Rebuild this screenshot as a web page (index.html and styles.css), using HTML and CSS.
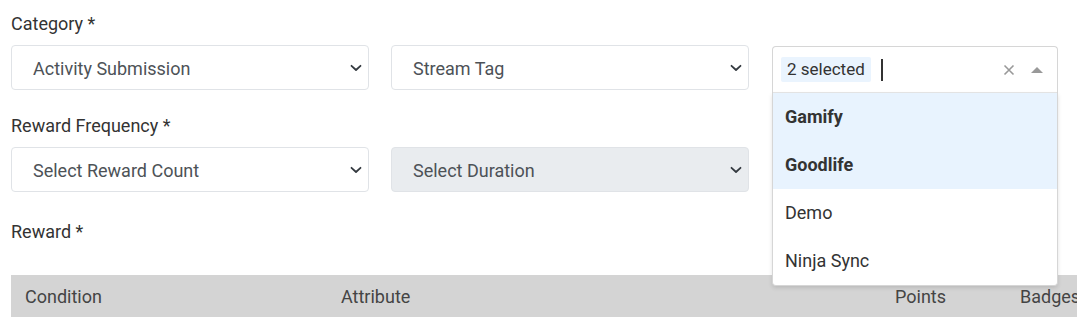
FILE: index.html
```html
<!DOCTYPE html>
<html lang="en">
<head>
    <meta charset="UTF-8">
    <title>Reward Rule</title>
    <link rel="stylesheet" href="styles.css">
</head>
<body>
    <div class="form">
        <!-- Category -->
        <label class="field-label">Category *</label>
        <div class="row">
            <div class="select">
                <span>Activity Submission</span>
                <svg class="chevron" width="12" height="8" viewBox="0 0 12 8"><path d="M1.5 1.8 6 6l4.5-4.2" fill="none" stroke="#343a40" stroke-width="1.8" stroke-linecap="round" stroke-linejoin="round"/></svg>
            </div>
            <div class="select">
                <span>Stream Tag</span>
                <svg class="chevron" width="12" height="8" viewBox="0 0 12 8"><path d="M1.5 1.8 6 6l4.5-4.2" fill="none" stroke="#343a40" stroke-width="1.8" stroke-linecap="round" stroke-linejoin="round"/></svg>
            </div>
            <div class="multi">
                <div class="multi-head">
                    <span class="chip">2 selected</span>
                    <span class="caret"></span>
                    <svg class="clear" width="12" height="12" viewBox="0 0 12 12"><path d="M1.5 1.5l9 9M10.5 1.5l-9 9" stroke="#999" stroke-width="1.6"/></svg>
                    <span class="arrow-up"></span>
                </div>
                <ul class="options">
                    <li class="selected">Gamify</li>
                    <li class="selected">Goodlife</li>
                    <li>Demo</li>
                    <li>Ninja Sync</li>
                </ul>
            </div>
        </div>

        <!-- Reward Frequency -->
        <label class="field-label">Reward Frequency *</label>
        <div class="row">
            <div class="select">
                <span>Select Reward Count</span>
                <svg class="chevron" width="12" height="8" viewBox="0 0 12 8"><path d="M1.5 1.8 6 6l4.5-4.2" fill="none" stroke="#343a40" stroke-width="1.8" stroke-linecap="round" stroke-linejoin="round"/></svg>
            </div>
            <div class="select disabled">
                <span>Select Duration</span>
                <svg class="chevron" width="12" height="8" viewBox="0 0 12 8"><path d="M1.5 1.8 6 6l4.5-4.2" fill="none" stroke="#343a40" stroke-width="1.8" stroke-linecap="round" stroke-linejoin="round"/></svg>
            </div>
        </div>

        <!-- Reward -->
        <label class="field-label reward-label">Reward *</label>
        <div class="table-head">
            <span>Condition</span>
            <span>Attribute</span>
            <span>Points</span>
            <span>Badges</span>
        </div>
    </div>
</body>
</html>
```

FILE: styles.css
```css
* { box-sizing: border-box; margin: 0; padding: 0; }

body {
    font-family: Roboto, "Noto Sans", Arial, sans-serif;
    font-size: 18px;
    color: #333;
    background: #fff;
    overflow: hidden;
}

.form {
    padding: 13px 0 0 11px;
    width: 1160px;
}

.field-label {
    display: block;
    line-height: 22px;
    margin-bottom: 10px;
    color: #333;
}

.reward-label {
    margin-top: 29px;
    margin-bottom: 32px;
}

.row {
    display: flex;
    align-items: flex-start;
    gap: 22px;
    height: 45px;
    margin-bottom: 25px;
}

.select {
    width: 358px;
    height: 45px;
    border: 1px solid #e0e3e7;
    border-radius: 4px;
    background: #fff;
    display: flex;
    align-items: center;
    justify-content: space-between;
    padding: 2px 6px 0 21px;
    color: #4d5257;
}

.select.disabled {
    background: #e9ecef;
}

.chevron { display: block; margin-top: -2px; }

/* multiselect with its open list */
.multi {
    position: relative;
    width: 286px;
    margin-top: 1px;
    margin-left: 1px;
    border: 1px solid #d6d6d6;
    border-bottom: none;
    border-radius: 4px 4px 0 0;
    background: #fff;
}

.multi-head {
    height: 46px;
    display: flex;
    align-items: center;
    padding: 0 0 0 8px;
    border-bottom: 1px solid #e6e6e6;
}

.chip {
    background: #eaf4fe;
    border-radius: 2px;
    padding: 2px 6px;
    line-height: 21px;
    font-size: 17px;
    color: #333;
}

.caret {
    width: 2px;
    height: 22px;
    background: #333;
    margin-left: 10px;
}

.clear {
    display: block;
    margin-left: auto;
}

.arrow-up {
    width: 0;
    height: 0;
    border-left: 6px solid transparent;
    border-right: 6px solid transparent;
    border-bottom: 6px solid #999;
    margin: 0 14px 0 16px;
}

.options {
    position: absolute;
    top: 46px;
    left: -1px;
    right: -1px;
    list-style: none;
    background: #fff;
    border: 1px solid #d6d6d6;
    border-top: none;
    border-radius: 0 0 4px 4px;
    box-shadow: 0 2px 4px rgba(0, 0, 0, 0.12);
    overflow: hidden;
    z-index: 5;
}

.options li {
    height: 48px;
    line-height: 48px;
    padding-left: 12px;
    color: #333;
}

.options li.selected {
    background: #e8f3fe;
    font-weight: bold;
}

.table-head {
    display: grid;
    grid-template-columns: 316px 554px 125px 1fr;
    height: 42px;
    align-items: center;
    background: #d4d4d4;
    padding-left: 14px;
    color: #444;
}
```
